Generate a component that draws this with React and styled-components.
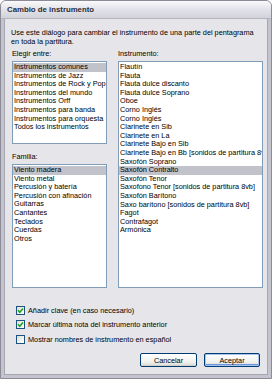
import React from 'react';
import styled, { createGlobalStyle } from 'styled-components';

const GlobalStyle = createGlobalStyle`
  html, body {
    margin: 0;
    padding: 0;
    background: #ffffff;
  }
  body {
    font-family: "Liberation Sans", Arial, sans-serif;
    font-size: 7.3px;
    color: #000;
  }
`;

const Window = styled.div`
  width: 272px;
  height: 379px;
  box-sizing: border-box;
  display: flex;
  flex-direction: column;
  background: #c4c4ce;
  border: 1px solid #8b8b97;
  border-radius: 6px 6px 0 0;
  padding: 0 3px 3px;
  overflow: hidden;
`;

const TitleBar = styled.div`
  height: 17px;
  flex: none;
  display: flex;
  align-items: center;
  margin: 0 -3px;
  padding-left: 6px;
  background: linear-gradient(#fafafc 0%, #e4e4ea 45%, #d2d2da 100%);
  border-bottom: 1px solid #b4b4be;
  font-weight: bold;
  font-size: 7.8px;
  color: #2c2c3a;
`;

const Body = styled.div`
  flex: 1;
  display: flex;
  flex-direction: column;
  background: #e6e6ea;
  padding: 9px 6px 7px 7px;
  border: 1px solid #a6a6b0;
  border-top: none;
`;

const Intro = styled.p`
  margin: 0 0 3px -1px;
  line-height: 9px;
  white-space: nowrap;
`;

const Columns = styled.div`
  display: grid;
  grid-template-columns: 95px 145px;
  column-gap: 11px;
  height: 239px;
`;

const Column = styled.div`
  display: flex;
  flex-direction: column;
`;

const Label = styled.div`
  line-height: 9px;
  margin-top: ${(p) => p.$top || 0}px;
  margin-bottom: 3px;
`;

const ListBox = styled.ul`
  list-style: none;
  margin: 0;
  padding: 1px 0 0;
  background: #fff;
  border: 1px solid #7f9db9;
  overflow: hidden;
  height: ${(p) => (p.$height ? `${p.$height}px` : 'auto')};
  flex: ${(p) => (p.$height ? 'none' : 1)};
  box-sizing: border-box;
`;

const Item = styled.li`
  height: 8.6px;
  line-height: 8.6px;
  padding-left: 1px;
  white-space: nowrap;
  overflow: hidden;
  background: ${(p) => (p.$selected ? '#c2c2cb' : 'transparent')};
`;

const Options = styled.div`
  display: flex;
  flex-direction: column;
  gap: 4px;
  margin-top: 17px;
`;

const Option = styled.label`
  display: flex;
  align-items: center;
  gap: 3px;
  height: 10px;
  margin-top: ${(p) => p.$top || 0}px;
  padding-left: 4px;
`;

const Box = styled.span`
  width: 9px;
  height: 9px;
  box-sizing: border-box;
  display: flex;
  align-items: center;
  justify-content: center;
  border: 1px solid #1c5180;
  background: linear-gradient(135deg, #dcdcd6 0%, #f6f6f4 70%, #ffffff 100%);
`;

const Buttons = styled.div`
  display: flex;
  justify-content: flex-end;
  gap: 7px;
  margin-top: auto;
  padding-right: 1px;
`;

const Button = styled.button`
  width: ${(p) => p.$width}px;
  height: 14px;
  padding: 0;
  font-family: inherit;
  font-size: 7.3px;
  color: #000;
  border: 1px solid #003c74;
  border-radius: 2px;
  background: linear-gradient(#ffffff 0%, #f3f3ef 60%, #dcdcd6 100%);
  box-shadow: ${(p) =>
    p.$default ? 'inset 0 0 0 1px #a6c3ef, inset 0 -1px 0 1px #6d95dc' : 'inset 0 -1px 0 #d0d0c8'};
`;

const Check = () => (
  <svg width="7" height="7" viewBox="0 0 7 7">
    <polyline points="1,3.3 2.8,5.2 6,1.5" fill="none" stroke="#21a121" strokeWidth="1.6" />
  </svg>
);

const choices = [
  'Instrumentos comunes',
  'Instrumentos de Jazz',
  'Instrumentos de Rock y Pop',
  'Instrumentos del mundo',
  'Instrumentos Orff',
  'Instrumentos para banda',
  'Instrumentos para orquesta',
  'Todos los instrumentos',
];

const families = [
  'Viento madera',
  'Viento metal',
  'Percusión y batería',
  'Percusión con afinación',
  'Guitarras',
  'Cantantes',
  'Teclados',
  'Cuerdas',
  'Otros',
];

const instruments = [
  'Flautín',
  'Flauta',
  'Flauta dulce discanto',
  'Flauta dulce Soprano',
  'Oboe',
  'Corno Inglés',
  'Corno Inglés',
  'Clarinete en Sib',
  'Clarinete en La',
  'Clarinete Bajo en Sib',
  'Clarinete Bajo en Bb [sonidos de partitura 8vb]',
  'Saxofón Soprano',
  'Saxofón Contralto',
  'Saxofón Tenor',
  'Saxofono Tenor [sonidos de partitura 8vb]',
  'Saxofón Barítono',
  'Saxo barítono [sonidos de partitura 8vb]',
  'Fagot',
  'Contrafagot',
  'Armónica',
];

const List = ({ items, selected, height }) => (
  <ListBox $height={height}>
    {items.map((name, i) => (
      <Item key={i} $selected={i === selected}>
        {name}
      </Item>
    ))}
  </ListBox>
);

export default function App() {
  return (
    <>
      <GlobalStyle />
      <Window>
        <TitleBar>Cambio de instrumento</TitleBar>
        <Body>
          <Intro>
            Use este diálogo para cambiar el instrumento de una parte del pentagrama
            <br />
            en toda la partitura.
          </Intro>

          <Columns>
            <Column>
              <Label>Elegir entre:</Label>
              <List items={choices} selected={0} height={83} />
              <Label $top={8}>Familia:</Label>
              <List items={families} selected={0} />
            </Column>
            <Column>
              <Label>Instrumento:</Label>
              <List items={instruments} selected={12} />
            </Column>
          </Columns>

          <Options>
            <Option>
              <Box>
                <Check />
              </Box>
              Añadir clave (en caso necesario)
            </Option>
            <Option>
              <Box>
                <Check />
              </Box>
              Marcar última nota del instrumento anterior
            </Option>
            <Option $top={1}>
              <Box />
              Mostrar nombres de instrumento en español
            </Option>
          </Options>

          <Buttons>
            <Button $width={57}>Cancelar</Button>
            <Button $width={56} $default>
              Aceptar
            </Button>
          </Buttons>
        </Body>
      </Window>
    </>
  );
}
